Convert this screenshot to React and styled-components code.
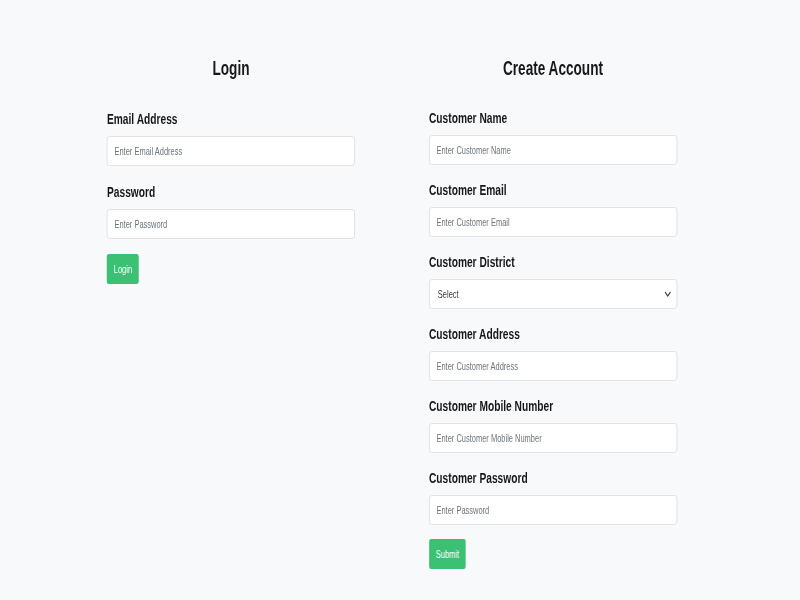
import React from 'react'
import styled, { createGlobalStyle } from 'styled-components'

// the reference is a wide page squeezed into 800px, so the page is laid out
// wide and squeezed horizontally by the same ratio
const SQUEEZE = 0.68

const GlobalStyle = createGlobalStyle`
  html, body {
    margin: 0;
    padding: 0;
    background: #f8f9fa;
    overflow: hidden;
  }
  body {
    font-family: "Liberation Sans", Arial, sans-serif;
    color: #16181b;
  }
`

const chevron = encodeURIComponent(
  '<svg xmlns="http://www.w3.org/2000/svg" width="10" height="6" viewBox="0 0 10 6"><path d="M1 1l4 4 4-4" fill="none" stroke="#343a40" stroke-width="1.4"/></svg>'
)

const Page = styled.div`
  width: ${800 / SQUEEZE}px;
  min-height: 600px;
  box-sizing: border-box;
  display: flex;
  gap: ${74 / SQUEEZE}px;
  padding: 56px 0 0 ${107 / SQUEEZE}px;
  transform: scaleX(${SQUEEZE});
  transform-origin: 0 0;
`

const Column = styled.div`
  width: ${248 / SQUEEZE}px;
  display: flex;
  flex-direction: column;
`

const Title = styled.h2`
  margin: 0 0 ${(p) => (p.$loose ? 30 : 29)}px;
  font-size: 20px;
  font-weight: 700;
  text-align: center;
  line-height: 24px;
`

const Field = styled.div`
  display: flex;
  flex-direction: column;
  margin-bottom: ${(p) => (p.$loose ? 17 : 16)}px;
`

const Label = styled.label`
  font-size: 15px;
  font-weight: 700;
  line-height: 17px;
  margin-bottom: 9px;
`

const Input = styled.input`
  height: 30px;
  box-sizing: border-box;
  border: 1px solid #dadde1;
  border-radius: 4px;
  background: #fff;
  padding: 0 10px;
  font-family: inherit;
  font-size: 11px;
  color: #495057;
  outline: none;

  &::placeholder {
    color: #6c757d;
  }
`

const Select = styled.select`
  appearance: none;
  height: 30px;
  box-sizing: border-box;
  border: 1px solid #dadde1;
  border-radius: 4px;
  background: #fff url("data:image/svg+xml,${chevron}") no-repeat right 8px center;
  padding: 0 12px;
  font-family: inherit;
  font-size: 11px;
  color: #343a40;
  outline: none;
`

const Button = styled.button`
  align-self: flex-start;
  height: 30px;
  padding: 0 10px;
  border: none;
  border-radius: 3px;
  background: #3cc174;
  color: #fff;
  font-family: inherit;
  font-size: 11px;
  margin-top: -2px;
`

const registerFields = [
  { label: 'Customer Name', placeholder: 'Enter Customer Name' },
  { label: 'Customer Email', placeholder: 'Enter Customer Email' },
  { label: 'Customer District', select: true },
  { label: 'Customer Address', placeholder: 'Enter Customer Address' },
  { label: 'Customer Mobile Number', placeholder: 'Enter Customer Mobile Number' },
  { label: 'Customer Password', placeholder: 'Enter Password', type: 'password' },
]

export default function App() {
  return (
    <>
      <GlobalStyle />
      <Page>
        <Column>
          <Title $loose>Login</Title>
          <Field $loose>
            <Label>Email Address</Label>
            <Input type="email" placeholder="Enter Email Address" />
          </Field>
          <Field $loose>
            <Label>Password</Label>
            <Input type="password" placeholder="Enter Password" />
          </Field>
          <Button>Login</Button>
        </Column>
        <Column>
          <Title>Create Account</Title>
          {registerFields.map((f) => (
            <Field key={f.label}>
              <Label>{f.label}</Label>
              {f.select ? (
                <Select defaultValue="">
                  <option value="">Select</option>
                </Select>
              ) : (
                <Input type={f.type || 'text'} placeholder={f.placeholder} />
              )}
            </Field>
          ))}
          <Button>Submit</Button>
        </Column>
      </Page>
    </>
  )
}
